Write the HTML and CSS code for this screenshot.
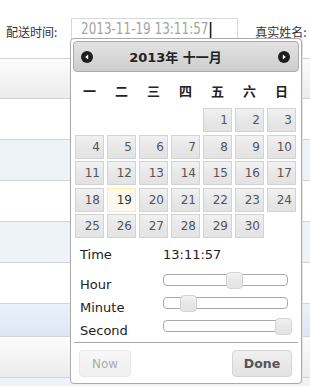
FILE: index.html
```html
<!DOCTYPE html>
<html lang="zh">
<head>
<meta charset="utf-8">
<link rel="stylesheet" href="styles.css">
</head>
<body>
<div class="page">
  <div class="form-row">
    <span class="lbl">配送时间:</span>
    <div class="field"><span class="val">2013-11-19 13:11:57<span class="caret"></span></span></div>
    <span class="lbl lbl2">真实姓名:</span>
  </div>
  <div class="rows">
    <div class="row r-head first"></div>
    <div class="row"></div>
    <div class="row r-alt"></div>
    <div class="row"></div>
    <div class="row r-alt"></div>
    <div class="row"></div>
    <div class="row r-hover"></div>
    <div class="row r-head"></div>
    <div class="row r-alt"></div>
  </div>

  <div class="picker">
    <div class="header">
      <svg class="nav" width="12" height="12" viewBox="0 0 12 12"><circle cx="6" cy="6" r="6" fill="#1e1e1e"/><polygon points="7.2,3.4 4.2,6 7.2,8.6" fill="#fff"/></svg>
      <span class="title">2013年 十一月</span>
      <svg class="nav" width="12" height="12" viewBox="0 0 12 12"><circle cx="6" cy="6" r="6" fill="#1e1e1e"/><polygon points="4.8,3.4 7.8,6 4.8,8.6" fill="#fff"/></svg>
    </div>
    <div class="weekdays">
      <span>一</span><span>二</span><span>三</span><span>四</span><span>五</span><span>六</span><span>日</span>
    </div>
    <div class="days">
      <span class="blank"></span><span class="blank"></span><span class="blank"></span><span class="blank"></span>
      <span class="d">1</span><span class="d">2</span><span class="d">3</span>
      <span class="d">4</span><span class="d">5</span><span class="d">6</span><span class="d">7</span><span class="d">8</span><span class="d">9</span><span class="d">10</span>
      <span class="d">11</span><span class="d">12</span><span class="d">13</span><span class="d">14</span><span class="d">15</span><span class="d">16</span><span class="d">17</span>
      <span class="d">18</span><span class="d today">19</span><span class="d">20</span><span class="d">21</span><span class="d">22</span><span class="d">23</span><span class="d">24</span>
      <span class="d">25</span><span class="d">26</span><span class="d">27</span><span class="d">28</span><span class="d">29</span><span class="d">30</span><span class="blank"></span>
    </div>
    <div class="time">
      <div class="trow t-first"><span class="lab">Time</span><span class="tval">13:11:57</span></div>
      <div class="trow srow"><span class="lab">Hour</span><div class="track"><span class="handle" style="left:57%"></span></div></div>
      <div class="trow srow"><span class="lab">Minute</span><div class="track"><span class="handle" style="left:20%"></span></div></div>
      <div class="trow srow last"><span class="lab">Second</span><div class="track"><span class="handle" style="left:97%"></span></div></div>
    </div>
    <div class="pane">
      <span class="btn now">Now</span>
      <span class="btn done">Done</span>
    </div>
  </div>
</div>
</body>
</html>
```
FILE: styles.css
```css
html, body {
  margin: 0;
  padding: 0;
  background: #fff;
  overflow: hidden;
}
body {
  font-family: "DejaVu Sans", "Noto Sans CJK SC", sans-serif;
}
.page {
  position: relative;
  width: 310px;
  height: 386px;
  overflow: hidden;
}

/* background form */
.form-row {
  display: flex;
  align-items: center;
  height: 58px;
  padding-left: 6px;
  box-sizing: border-box;
  white-space: nowrap;
}
.lbl {
  font-family: "Noto Sans CJK SC", sans-serif;
  font-size: 12px;
  color: #333;
  padding-top: 5px;
  flex: none;
}
.lbl2 {
  margin-left: 17px;
}
.field {
  flex: none;
  width: 167px;
  height: 23px;
  box-sizing: border-box;
  border: 1px solid #d9d9d9;
  margin-left: 14px;
  padding-left: 9px;
  display: flex;
  align-items: center;
  overflow: hidden;
}
.val {
  display: inline-block;
  font-family: "DejaVu Sans", sans-serif;
  font-size: 15px;
  line-height: 18px;
  color: #a3a3a3;
  white-space: nowrap;
  transform: scaleX(0.8);
  transform-origin: 0 50%;
}
.caret {
  display: inline-block;
  vertical-align: middle;
  width: 1.3px;
  height: 16px;
  background: #222;
  margin-left: 2px;
}

.rows .row {
  height: 40px;
  border-top: 1px solid #d2d2d2;
}
.rows .row.first {
  height: 39px;
}
.r-head {
  background: linear-gradient(#fcfcfc, #ececec);
}
.r-alt {
  background: #eef3fa;
}
.r-hover {
  height: 32px !important;
  background: linear-gradient(#eaf1fa, #dde7f4);
}

/* picker */
.picker {
  position: absolute;
  left: 70px;
  top: 38px;
  width: 226px;
  padding: 2px;
  border: 1px solid #aaa;
  border-radius: 4px;
  background: #fff;
  box-shadow: 1px 0 0 #e4e4e4;
}
.header {
  height: 29px;
  border: 1px solid #aaa;
  border-radius: 4px;
  background: linear-gradient(#e3e3e3, #cdcdcd);
  display: flex;
  align-items: center;
  padding: 0 8px 0 7px;
}
.nav {
  flex: none;
  display: block;
}
.title {
  flex: 1;
  text-align: center;
  font-weight: bold;
  font-size: 13px;
  color: #222;
  padding-right: 20px;
}
.weekdays {
  display: grid;
  grid-template-columns: repeat(7, 29px);
  column-gap: 3px;
  margin-left: 2px;
  height: 36px;
  align-items: center;
  text-align: center;
  font-family: "Noto Sans CJK SC", sans-serif;
  font-weight: bold;
  font-size: 13px;
  color: #222;
}
.days {
  display: grid;
  grid-template-columns: repeat(7, 29px);
  grid-auto-rows: 24px;
  column-gap: 3px;
  row-gap: 2.5px;
  margin-left: 2px;
}
.d {
  box-sizing: border-box;
  border: 1px solid #d3d3d3;
  background: linear-gradient(#f1f1f1, #e7e7e7 55%, #e3e3e3);
  color: #555;
  font-size: 12px;
  line-height: 22px;
  text-align: right;
  padding-right: 3px;
}
.d.today {
  border-color: #fcefa1;
  background: #fbf9ee;
  color: #363636;
}

.time {
  margin-top: 9px;
  font-size: 13px;
  color: #222;
}
.trow {
  display: grid;
  grid-template-columns: 83px 125px;
  padding-left: 7px;
}
.t-first {
  height: 16px;
  line-height: 16px;
  margin-bottom: 11px;
}
.srow {
  height: 23px;
}
.srow.last {
  height: 22px;
}
.srow .lab {
  padding-top: 3px;
  line-height: 16px;
}
.track {
  position: relative;
  height: 12px;
  box-sizing: border-box;
  border: 1px solid #aaa;
  border-radius: 4px;
  background: #fff;
}
.handle {
  position: absolute;
  top: -3.5px;
  width: 17px;
  height: 17px;
  margin-left: -8.5px;
  box-sizing: border-box;
  border: 1px solid #d3d3d3;
  border-radius: 4px;
  background: linear-gradient(#f1f1f1, #e7e7e7 55%, #e3e3e3);
}

.pane {
  border-top: 1px solid #aaa;
  margin: 0 1px;
  padding: 7px 6px 4px 5px;
  display: flex;
  justify-content: space-between;
}
.btn {
  height: 27px;
  box-sizing: border-box;
  border: 1px solid #d3d3d3;
  border-radius: 4px;
  background: linear-gradient(#f1f1f1, #e7e7e7 55%, #e3e3e3);
  color: #555;
  font-size: 12px;
  display: flex;
  align-items: center;
  justify-content: center;
}
.now {
  width: 52px;
  opacity: 0.5;
}
.done {
  width: 60px;
  font-weight: bold;
  font-size: 12.5px;
}
```
